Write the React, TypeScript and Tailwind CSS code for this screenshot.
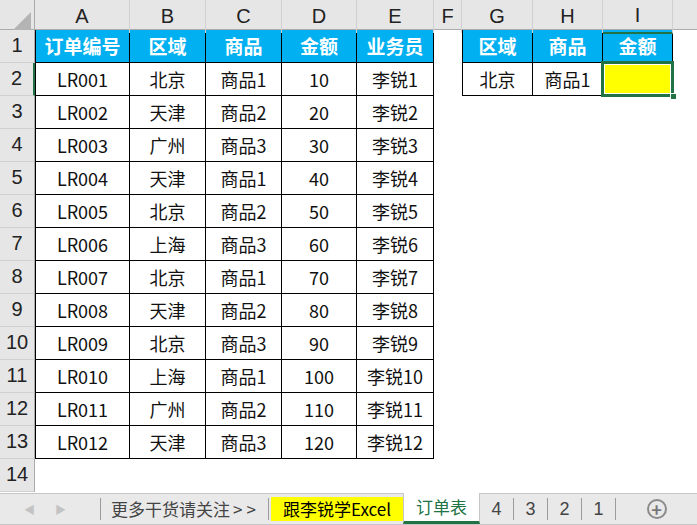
import React from 'react';

const cols = ['A', 'B', 'C', 'D', 'E', 'F', 'G', 'H', 'I'];

const orders = [
  ['LR001', '北京', '商品1', '10', '李锐1'],
  ['LR002', '天津', '商品2', '20', '李锐2'],
  ['LR003', '广州', '商品3', '30', '李锐3'],
  ['LR004', '天津', '商品1', '40', '李锐4'],
  ['LR005', '北京', '商品2', '50', '李锐5'],
  ['LR006', '上海', '商品3', '60', '李锐6'],
  ['LR007', '北京', '商品1', '70', '李锐7'],
  ['LR008', '天津', '商品2', '80', '李锐8'],
  ['LR009', '北京', '商品3', '90', '李锐9'],
  ['LR010', '上海', '商品1', '100', '李锐10'],
  ['LR011', '广州', '商品2', '110', '李锐11'],
  ['LR012', '天津', '商品3', '120', '李锐12'],
];

const gridCols = 'grid grid-cols-[35px_95px_76px_76px_75px_77px_28px_71px_70px_70px_1fr]';

const HeadCell = ({ children, left }: { children: string; left?: boolean }) => (
  <div
    className={`h-[33px] bg-[#00b0f0] border-r border-b border-black ${left ? 'border-l' : ''} flex items-center justify-center text-white font-bold text-[19px]`}
  >
    {children}
  </div>
);

const DataCell = ({ children, left }: { children?: string; left?: boolean }) => (
  <div
    className={`h-[33px] bg-white border-r border-b border-black ${left ? 'border-l' : ''} flex items-center justify-center text-[#111] text-[18px] pt-px`}
  >
    {children}
  </div>
);

const Empty = () => <div className="h-[33px] bg-white" />;

const RowHead = ({ n, active }: { n: number; active?: boolean }) => (
  <div
    className={`h-[33px] bg-[#e6e6e6] border-b border-[#d0d0d0] ${active ? 'border-r-2 border-r-[#217346]' : 'border-r border-r-[#ababab]'} flex items-end justify-center pb-[2px] text-[20px] text-[#222] font-['Liberation_Sans',sans-serif]`}
  >
    {n}
  </div>
);

export default function App() {
  return (
    <div className="w-[697px] h-[525px] overflow-hidden bg-white font-['Noto_Sans_CJK_SC','Liberation_Sans',sans-serif] flex flex-col">
      {/* column headers */}
      <div className={`${gridCols} h-[30px] bg-[#e6e6e6] border-b border-[#ababab]`}>
        <div className="relative border-r border-[#ababab]">
          <div className="absolute right-[3px] bottom-[3px] w-0 h-0 border-l-[18px] border-l-transparent border-b-[18px] border-b-[#b4b4b4]" />
        </div>
        {cols.map((c) => (
          <div
            key={c}
            className={`relative flex items-end justify-center pb-[2px] text-[20px] text-[#222] font-['Liberation_Sans',sans-serif] border-r border-[#d0d0d0] ${c === 'I' ? 'border-b-2 border-b-[#217346] -mb-px' : ''}`}
          >
            {c}
          </div>
        ))}
        <div />
      </div>

      {/* rows */}
      <div className={gridCols}>
        <RowHead n={1} />
        <HeadCell left>订单编号</HeadCell>
        <HeadCell>区域</HeadCell>
        <HeadCell>商品</HeadCell>
        <HeadCell>金额</HeadCell>
        <HeadCell>业务员</HeadCell>
        <Empty />
        <HeadCell left>区域</HeadCell>
        <HeadCell>商品</HeadCell>
        <HeadCell>金额</HeadCell>
        <Empty />

        {orders.map((r, i) => (
          <React.Fragment key={r[0]}>
            <RowHead n={i + 2} active={i === 0} />
            <DataCell left>{r[0]}</DataCell>
            <DataCell>{r[1]}</DataCell>
            <DataCell>{r[2]}</DataCell>
            <DataCell>{r[3]}</DataCell>
            <DataCell>{r[4]}</DataCell>
            <Empty />
            {i === 0 ? (
              <>
                <DataCell left>北京</DataCell>
                <DataCell>商品1</DataCell>
                <div className="relative h-[33px] bg-[#ffff00] border-b border-black">
                  <div className="absolute -left-[2px] -top-[2px] -right-px -bottom-[2px] border-[3px] border-[#217346] outline outline-1 outline-white -outline-offset-4" />
                  <div className="absolute -right-[4px] -bottom-[5px] w-[7px] h-[7px] bg-[#217346] border border-white" />
                </div>
              </>
            ) : (
              <>
                <Empty />
                <Empty />
                <Empty />
              </>
            )}
            <Empty />
          </React.Fragment>
        ))}

        <RowHead n={14} />
        <Empty />
      </div>

      {/* sheet tabs */}
      <div className="mt-auto h-[32px] bg-[#e9e9e9] border-t border-[#c6c6c6] border-b border-b-[#c6c6c6] flex items-stretch text-[17px]">
        <div className="w-[100px] flex items-center gap-[20px] pl-[24px] text-[#c3c3c3] text-[11px]">
          <span>◀</span>
          <span>▶</span>
        </div>
        <div className="w-px my-[4px] bg-[#9c9c9c]" />
        <div className="w-[167px] pl-[10px] flex items-center text-[#444]">
          更多干货请关注<span className="ml-[3px] tracking-[4px]">&gt;&gt;</span>
        </div>
        <div className="w-px my-[4px] bg-[#9c9c9c]" />
        <div className="ml-[2px] my-[3px] w-[132px] bg-[#ffff00] flex items-center justify-center text-black">跟李锐学Excel</div>
        <div className="-mt-px w-[77px] bg-white border-x border-[#c6c6c6] border-b-[3px] border-b-[#217346] flex items-center justify-center text-[#217346]">
          订单表
        </div>
        {['4', '3', '2', '1'].map((t) => (
          <React.Fragment key={t}>
            <div className="w-[33px] flex items-center justify-center text-[#444] font-['Liberation_Sans',sans-serif] text-[18px]">{t}</div>
            <div className="w-px my-[4px] bg-[#9c9c9c]" />
          </React.Fragment>
        ))}
        <div className="flex-1 flex items-center justify-center">
          <div className="w-[20px] h-[20px] rounded-full border-2 border-[#8a8a8a] flex items-center justify-center text-[#777] text-[18px] leading-none font-bold">
            +
          </div>
        </div>
      </div>
    </div>
  );
}
